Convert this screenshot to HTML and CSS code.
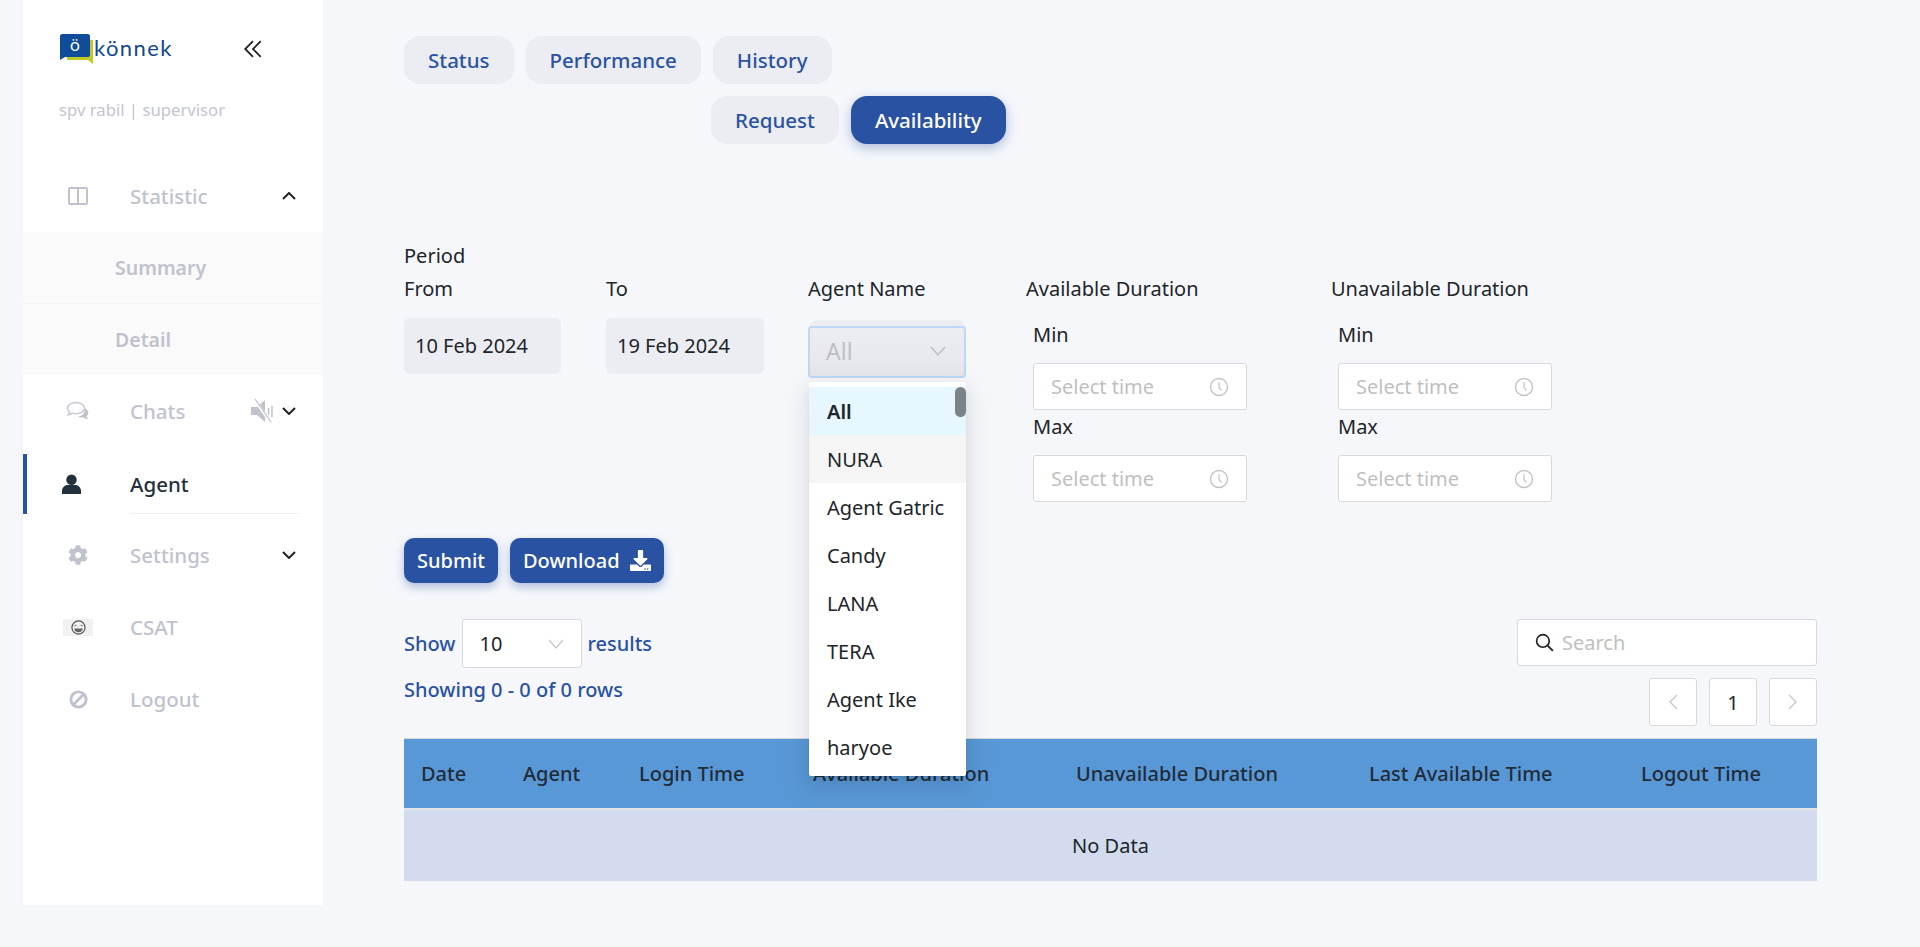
FILE: index.html
```html
<!DOCTYPE html>
<html lang="en">
  <head>
    <meta charset="UTF-8" />
    <meta name="viewport" content="width=device-width, initial-scale=1.0" />
    <title>Agent Availability</title>
    <link rel="stylesheet" href="styles.css">
  </head>
  <body>
    <div class="page">
      <aside class="sidebar">
        <div class="brand">
          <div class="logo">
            <span class="logo-box">
              <svg class="logo-bg" viewBox="0 0 33 30" width="33" height="30"><path d="M7 6h26v24l-5-4H7z" fill="#bfcb24"/><path d="M2 0h26c1 0 2 1 2 2v19c0 1-1 2-2 2H5l-5 3V2C0 1 1 0 2 0z" fill="#0f4c9a"/></svg>
              <span class="logo-letter">ö</span>
            </span>
            <span class="logo-name">könnek</span>
          </div>
          <svg class="collapse" viewBox="0 0 18 18" width="20" height="20"><path d="M9 2L2 9l7 7M16 2L9 9l7 7" fill="none" stroke="#222" stroke-width="1.600"/></svg>
        </div>
        <div class="user">spv rabil | supervisor</div>

        <nav class="menu">
          <div class="item">
            <span class="ico"><svg viewBox="0 0 20 18" width="20" height="18"><rect x="1" y="1" width="18" height="16" rx="1" fill="none" stroke="#c0c2ce" stroke-width="2"/><path d="M10 1v16" stroke="#c0c2ce" stroke-width="2"/></svg></span>
            <span class="label">Statistic</span>
            <svg class="chev" viewBox="0 0 14 8" width="14" height="8"><path d="M1 7l6-6 6 6" fill="none" stroke="#222" stroke-width="2"/></svg>
          </div>
          <div class="submenu">
            <div class="subitem"><span>Summary</span></div>
            <div class="subitem"><span>Detail</span></div>
          </div>
          <div class="item">
            <span class="ico"><svg viewBox="0 0 24 20" width="24" height="20"><path d="M13 5c4 0 7 2.500 9 5 .6 1.800.2 3.800-1.400 5.200.3 1.100.9 2.100 1.600 3-1.800-.3-3.400-1-4.600-2-1.800.5-4 .3-6-.5 4-.5 7-3 7-6 0-1.800-2.500-3.700-5.600-4.700z" fill="#c0c2ce"/><path d="M10 1.500C5.300 1.500 1.500 4 1.500 7.200c0 1.500.8 2.900 2.200 3.900-.3 1-.9 1.900-1.500 2.600 1.500-.2 3-.8 4.100-1.600 1.200.4 2.400.6 3.700.6 4.700 0 8.500-2.400 8.500-5.500S14.700 1.500 10 1.500z" fill="#fff" stroke="#c8cad4" stroke-width="1.500"/></svg></span>
            <span class="label">Chats</span>
            <svg class="mute" viewBox="0 0 24 24" width="24" height="24"><path d="M1 8h6l8-7v22l-8-7H1z" fill="#c0c2ce"/><path d="M18.500 9v7M22 7v11" stroke="#c0c2ce" stroke-width="1.500"/><path d="M4 0l17 24" stroke="#fff" stroke-width="3"/><path d="M5 0l16 23" stroke="#c0c2ce" stroke-width="1.200"/></svg>
            <svg class="chev" viewBox="0 0 14 8" width="14" height="8"><path d="M1 1l6 6 6-6" fill="none" stroke="#222" stroke-width="2"/></svg>
          </div>
          <div class="item active">
            <span class="ico"><svg viewBox="0 0 20 22" width="19" height="21"><circle cx="10" cy="6" r="5.500" fill="#22303c"/><path d="M0 21v-3c0-4 3-6.500 6-6.500h8c3 0 6 2.500 6 6.500v3z" fill="#22303c"/></svg></span>
            <span class="label">Agent</span>
          </div>
          <div class="item">
            <span class="ico"><svg viewBox="0 0 512 512" width="20" height="20"><path fill="#c0c2ce" d="M487.400 315.700l-42.600-24.600c4.300-23.200 4.300-47 0-70.200l42.600-24.600c4.900-2.800 7.100-8.600 5.500-14-11.100-35.600-30-67.800-54.700-94.600-3.800-4.100-10-5.100-14.800-2.300L380.800 110c-17.900-15.400-38.500-27.300-60.800-35.100V25.800c0-5.600-3.900-10.500-9.400-11.700-36.700-8.200-74.300-7.800-109.200 0-5.500 1.200-9.400 6.100-9.400 11.700V75c-22.200 7.900-42.800 19.800-60.800 35.100L88.700 85.500c-4.900-2.800-11-1.900-14.800 2.300-24.700 26.700-43.600 58.900-54.700 94.600-1.700 5.400.6 11.200 5.500 14L67.300 221c-4.300 23.200-4.300 47 0 70.200l-42.600 24.600c-4.900 2.800-7.100 8.600-5.500 14 11.100 35.600 30 67.800 54.700 94.600 3.800 4.100 10 5.100 14.800 2.300l42.600-24.600c17.900 15.400 38.500 27.300 60.800 35.100v49.200c0 5.600 3.900 10.500 9.400 11.700 36.700 8.200 74.300 7.800 109.200 0 5.500-1.200 9.400-6.100 9.400-11.700v-49.200c22.200-7.900 42.800-19.800 60.800-35.100l42.600 24.600c4.900 2.800 11 1.900 14.800-2.300 24.700-26.700 43.600-58.900 54.700-94.600 1.500-5.500-.7-11.300-5.600-14.100zM256 336c-44.100 0-80-35.900-80-80s35.900-80 80-80 80 35.900 80 80-35.900 80-80 80z"/></svg></span>
            <span class="label">Settings</span>
            <svg class="chev" viewBox="0 0 14 8" width="14" height="8"><path d="M1 1l6 6 6-6" fill="none" stroke="#222" stroke-width="2"/></svg>
          </div>
          <div class="item">
            <span class="ico"><span class="csat"><svg viewBox="0 0 16 16" width="15" height="15"><circle cx="8" cy="8" r="7" fill="none" stroke="#555" stroke-width="1.300"/><path d="M3.500 6.500c.5-1 2-1 2.500 0M10 6.500c.5-1 2-1 2.500 0" fill="none" stroke="#555"/><path d="M3.500 9h9c0 2.500-2 4-4.500 4s-4.500-1.500-4.500-4z" fill="#666"/></svg></span></span>
            <span class="label">CSAT</span>
          </div>
          <div class="item">
            <span class="ico"><svg viewBox="0 0 20 20" width="19" height="19"><circle cx="10" cy="10" r="8" fill="none" stroke="#c0c2ce" stroke-width="3"/><path d="M5 15L15 5" stroke="#c0c2ce" stroke-width="3"/></svg></span>
            <span class="label">Logout</span>
          </div>
        </nav>
      </aside>

      <main class="main">
        <div class="tabs">
          <div class="tab-row">
            <button class="tab">Status</button>
            <button class="tab">Performance</button>
            <button class="tab">History</button>
          </div>
          <div class="tab-row tab-row-second">
            <button class="tab">Request</button>
            <button class="tab tab-active">Availability</button>
          </div>
        </div>

        <div class="period">Period</div>
        <div class="filters">
          <div>
            <div class="field-label">From</div>
            <div class="date-box">10 Feb 2024</div>
          </div>
          <div>
            <div class="field-label">To</div>
            <div class="date-box date-box-to">19 Feb 2024</div>
          </div>
          <div class="agent-field">
            <div class="field-label">Agent Name</div>
            <div class="agent-select-wrap">
              <div class="agent-select">
                <span>All</span>
                <svg viewBox="0 0 16 10" width="16" height="10"><path d="M1 1l7 8 7-8" fill="none" stroke="#bbb" stroke-width="1.300"/></svg>
              </div>
            </div>
            <div class="dropdown">
              <div class="option option-selected">All</div>
              <div class="option option-hover">NURA</div>
              <div class="option">Agent Gatric</div>
              <div class="option">Candy</div>
              <div class="option">LANA</div>
              <div class="option">TERA</div>
              <div class="option">Agent Ike</div>
              <div class="option">haryoe</div>
              <div class="scroll-thumb"></div>
            </div>
          </div>
          <div>
            <div class="field-label">Available Duration</div>
            <div class="duration">
              <div class="sub-label">Min</div>
              <div class="time-box">Select time
                <svg viewBox="0 0 20 20" width="20" height="20"><circle cx="10" cy="10" r="8.500" fill="none" stroke="#c4c4c4" stroke-width="1.400"/><path d="M10 5v5.500l2.500 3" fill="none" stroke="#c4c4c4" stroke-width="1.200"/></svg>
              </div>
              <div class="sub-label sub-label-max">Max</div>
              <div class="time-box">Select time
                <svg viewBox="0 0 20 20" width="20" height="20"><circle cx="10" cy="10" r="8.500" fill="none" stroke="#c4c4c4" stroke-width="1.400"/><path d="M10 5v5.500l2.500 3" fill="none" stroke="#c4c4c4" stroke-width="1.200"/></svg>
              </div>
            </div>
          </div>
          <div>
            <div class="field-label">Unavailable Duration</div>
            <div class="duration">
              <div class="sub-label">Min</div>
              <div class="time-box">Select time
                <svg viewBox="0 0 20 20" width="20" height="20"><circle cx="10" cy="10" r="8.500" fill="none" stroke="#c4c4c4" stroke-width="1.400"/><path d="M10 5v5.500l2.500 3" fill="none" stroke="#c4c4c4" stroke-width="1.200"/></svg>
              </div>
              <div class="sub-label sub-label-max">Max</div>
              <div class="time-box">Select time
                <svg viewBox="0 0 20 20" width="20" height="20"><circle cx="10" cy="10" r="8.500" fill="none" stroke="#c4c4c4" stroke-width="1.400"/><path d="M10 5v5.500l2.500 3" fill="none" stroke="#c4c4c4" stroke-width="1.200"/></svg>
              </div>
            </div>
          </div>
        </div>

        <div class="actions">
          <button class="btn">Submit</button>
          <button class="btn">Download
            <svg viewBox="0 0 512 512" width="21" height="21"><path fill="#fff" d="M216 0h80c13.300 0 24 10.700 24 24v168h87.700c17.800 0 26.700 21.500 14.100 34.100L269.700 378.300c-7.500 7.500-19.800 7.500-27.300 0L90.100 226.100c-12.600-12.600-3.700-34.100 14.100-34.100H192V24c0-13.300 10.700-24 24-24zm296 376v112c0 13.300-10.700 24-24 24H24c-13.300 0-24-10.700-24-24V376c0-13.300 10.700-24 24-24h146.700l49 49c20.100 20.100 52.500 20.100 72.600 0l49-49H488c13.300 0 24 10.700 24 24zm-124 88c0-11-9-20-20-20s-20 9-20 20 9 20 20 20 20-9 20-20zm64 0c0-11-9-20-20-20s-20 9-20 20 9 20 20 20 20-9 20-20z"/></svg>
          </button>
        </div>

        <div class="table-tools">
          <div class="tools-left">
            <div class="show">
              <span>Show</span>
              <div class="page-size">
                <span>10</span>
                <svg viewBox="0 0 16 10" width="16" height="10"><path d="M1 1l7 8 7-8" fill="none" stroke="#c4c4c4" stroke-width="1.200"/></svg>
              </div>
              <span>results</span>
            </div>
            <div class="showing">Showing 0 - 0 of 0 rows</div>
          </div>
          <div class="tools-right">
            <div class="search">
              <svg viewBox="0 0 20 20" width="21" height="21"><circle cx="8.500" cy="8.500" r="6" fill="none" stroke="#222" stroke-width="1.600"/><path d="M13 13l5 5" stroke="#222" stroke-width="1.800"/></svg>
              <span>Search</span>
            </div>
            <div class="pager">
              <div class="pager-btn"><svg viewBox="0 0 10 16" width="10" height="16"><path d="M9 1L2 8l7 7" fill="none" stroke="#c4c4c4" stroke-width="1.300"/></svg></div>
              <div class="pager-btn">1</div>
              <div class="pager-btn"><svg viewBox="0 0 10 16" width="10" height="16"><path d="M1 1l7 7-7 7" fill="none" stroke="#c4c4c4" stroke-width="1.300"/></svg></div>
            </div>
          </div>
        </div>

        <table class="data">
          <thead>
            <tr>
              <th class="col-date">Date</th>
              <th class="col-agent">Agent</th>
              <th class="col-login">Login Time</th>
              <th class="col-avail">Available Duration</th>
              <th class="col-unavail">Unavailable Duration</th>
              <th class="col-last">Last Available Time</th>
              <th>Logout Time</th>
            </tr>
          </thead>
          <tbody>
            <tr><td colspan="7">No Data</td></tr>
          </tbody>
        </table>
      </main>
    </div>
  </body>
</html>
```

FILE: styles.css
```css
* {
  box-sizing: border-box;
}
body {
  margin: 0;
  background: #f5f7fb;
  color: #212529;
  font-family: "Noto Sans", sans-serif;
  font-size: 20px;
}
button {
  font-family: inherit;
  border: none;
}
svg {
  display: block;
  flex: none;
}
.page {
  display: flex;
  align-items: flex-start;
  height: 947px;
  overflow: hidden;
}

/* sidebar */
.sidebar {
  width: 300px;
  height: 905px;
  margin-left: 23px;
  background: #fff;
  flex: none;
}
.brand {
  display: flex;
  align-items: center;
  justify-content: space-between;
  padding: 33px 60px 0 37px;
  height: 64px;
}
.logo {
  display: flex;
  align-items: flex-start;
  gap: 1px;
}
.logo-box {
  position: relative;
  width: 33px;
  height: 30px;
}
.logo-bg {
  position: absolute;
  top: 0;
  left: 0;
}
.logo-letter {
  position: absolute;
  top: 0;
  left: 0;
  width: 30px;
  color: #fff;
  font-size: 17px;
  line-height: 22px;
  text-align: center;
}
.logo-name {
  color: #12498f;
  font-family: Lato, sans-serif;
  font-size: 22px;
  line-height: 28px;
  letter-spacing: 1.4px;
}
.user {
  padding: 34px 0 0 36px;
  height: 96px;
  color: #c3c5cf;
  font-size: 16.7px;
}
.item {
  display: flex;
  align-items: center;
  height: 72px;
  padding-right: 27px;
  color: #c0c2ce;
  font-size: 20.5px;
  font-weight: 500;
}
.ico {
  width: 32px;
  margin: 0 36px 0 39px;
  display: flex;
  align-items: center;
  justify-content: center;
  flex: none;
}
.label {
  flex: 1;
}
.chev {
  margin-left: 8px;
}
.csat {
  display: flex;
  justify-content: center;
  align-items: center;
  flex: none;
  width: 30px;
  height: 17px;
  background: #f1f1f1;
}
.submenu {
  background: #fafafa;
}
.subitem {
  height: 71.5px;
  padding: 0 34px 0 92px;
  display: flex;
  align-items: center;
  color: #c0c2ce;
  font-size: 19.5px;
  font-weight: 600;
}
.subitem:first-child {
  border-bottom: 1px solid #f3f3f3;
}
.active {
  height: 60px;
  margin: 7px 0 5px;
  border-left: 4px solid #2a52a3;
  color: #22303c;
  position: relative;
}
.active .ico {
  margin: 0 43px 0 28px;
}
.active::after {
  content: "";
  position: absolute;
  left: 103px;
  right: 24px;
  bottom: 0;
  border-bottom: 1px solid #f0f0f0;
}

/* main column */
.main {
  flex: 1;
  padding: 36px 103px 0 81px;
}
.tabs {
  display: flex;
  flex-direction: column;
  gap: 12px;
}
.tab-row {
  display: flex;
  gap: 12px;
}
.tab-row-second {
  margin-left: 307px;
}
.tab {
  height: 48px;
  padding: 0 24px;
  border-radius: 16px;
  background: #ecedf2;
  color: #2a52a3;
  font-size: 20.5px;
  font-weight: 500;
}
.tab-active {
  background: #2a52a3;
  color: #fff;
  box-shadow: 0 4px 12px rgba(42, 82, 163, 0.35);
}
.period {
  margin-top: 98px;
  line-height: 28px;
}
.filters {
  display: grid;
  grid-template-columns: 202px 202px 218px 305px 230px;
  margin-top: 5px;
}
.field-label {
  line-height: 28px;
  white-space: nowrap;
}
.date-box {
  width: 157px;
  height: 56px;
  margin-top: 15px;
  padding-left: 11px;
  display: flex;
  align-items: center;
  background: #ecedf2;
  border-radius: 6px;
  padding-bottom: 2px;
}
.date-box-to {
  width: 158px;
}
.agent-field {
  position: relative;
}
.agent-select-wrap {
  width: 158px;
  margin-top: 17px;
  padding-top: 6px;
  background: #ecedf2;
  border-radius: 10px 10px 4px 4px;
}
.agent-select {
  height: 52px;
  display: flex;
  align-items: center;
  justify-content: space-between;
  padding: 0 18px 2px 16px;
  background: linear-gradient(#ecedf2, #e6e7ec);
  border: 2px solid #bcd8f6;
  border-radius: 4px;
  color: #bfbfbf;
  font-size: 23px;
}
.dropdown {
  position: absolute;
  top: 107px;
  left: 1px;
  width: 157px;
  height: 394px;
  padding-top: 5px;
  background: #fff;
  border-radius: 2px;
  box-shadow: 0 3px 6px -4px rgba(0, 0, 0, 0.12), 0 6px 16px rgba(0, 0, 0, 0.08), 0 9px 28px 8px rgba(0, 0, 0, 0.05);
  overflow: hidden;
  z-index: 5;
}
.option {
  height: 48px;
  padding: 0 18px;
  display: flex;
  align-items: center;
  color: #212529;
  font-size: 20px;
}
.option-selected {
  background: #e6f7ff;
  font-weight: 600;
}
.option-hover {
  background: #f5f5f5;
}
.scroll-thumb {
  position: absolute;
  top: 5px;
  right: 0;
  width: 11px;
  height: 30px;
  background: #7c8388;
  border-radius: 6px;
}
.duration {
  padding: 18px 0 0 7px;
}
.sub-label {
  line-height: 28px;
}
.sub-label-max {
  margin-top: 3px;
}
.time-box {
  width: 214px;
  height: 47px;
  margin-top: 14px;
  padding: 0 17px;
  display: flex;
  align-items: center;
  justify-content: space-between;
  background: #fff;
  border: 1px solid #d9d9d9;
  border-radius: 3px;
  color: #bfbfbf;
  font-size: 20px;
}
.actions {
  display: flex;
  gap: 12px;
  margin-top: 36px;
}
.btn {
  height: 45px;
  padding: 0 13px;
  display: flex;
  align-items: center;
  gap: 10px;
  background: #2a52a3;
  border-radius: 10px;
  color: #fff;
  font-size: 20px;
  font-weight: 500;
  box-shadow: 0 4px 10px rgba(42, 82, 163, 0.35);
}

/* table tools */
.table-tools {
  display: flex;
  justify-content: space-between;
  align-items: flex-start;
  margin-top: 36px;
  height: 119px;
}
.tools-left {
  color: #2a52a3;
  font-size: 20px;
  font-weight: 500;
}
.show {
  display: flex;
  align-items: center;
  gap: 6px;
}
.page-size {
  width: 120px;
  height: 49px;
  display: flex;
  align-items: center;
  justify-content: space-between;
  padding: 0 17px;
  background: #fff;
  border: 1px solid #d9d9d9;
  border-radius: 3px;
  color: #212529;
  font-weight: 400;
}
.showing {
  margin-top: 8px;
}
.tools-right {
  display: flex;
  flex-direction: column;
  align-items: flex-end;
  gap: 12px;
}
.search {
  width: 300px;
  height: 47px;
  padding: 0 16px;
  display: flex;
  align-items: center;
  gap: 7px;
  background: #fff;
  border: 1px solid #d9d9d9;
  border-radius: 3px;
  color: #bfbfbf;
  font-size: 20px;
}
.pager {
  display: flex;
  gap: 12px;
}
.pager-btn {
  width: 48px;
  height: 48px;
  display: flex;
  align-items: center;
  justify-content: center;
  background: #fff;
  border: 1px solid #d9d9d9;
  border-radius: 3px;
}

/* table */
.data {
  width: 100%;
  border-collapse: collapse;
  table-layout: fixed;
}
th {
  height: 70px;
  padding: 0 17px;
  background: #5998d6;
  border-top: 1px solid #d9d9d9;
  border-bottom: 2px solid #e3e3e8;
  font-size: 20px;
  font-weight: 500;
  text-align: left;
  color: #222c38;
  white-space: nowrap;
}
td {
  height: 72px;
  background: #d2dcee;
  text-align: center;
}
.col-date {
  width: 102px;
}
.col-agent {
  width: 116px;
}
.col-login {
  width: 174px;
}
.col-avail {
  width: 263px;
}
.col-unavail {
  width: 293px;
}
.col-last {
  width: 272px;
}
```
